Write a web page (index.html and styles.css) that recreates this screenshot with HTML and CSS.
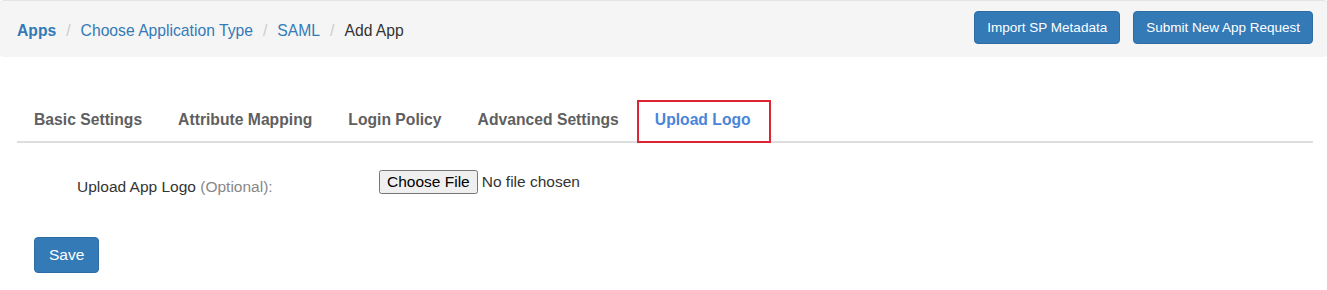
FILE: index.html
```html
<!DOCTYPE html>
<html lang="en">

<head>
    <meta charset="UTF-8">
    <meta name="viewport" content="width=device-width, initial-scale=1.0">
    <title>Add App</title>
    <link rel="stylesheet" href="styles.css">
</head>

<body>

    <!-- breadcrumb and actions -->
    <div class="page-header">
        <div class="breadcrumb">
            <a href="javascript:;" class="crumb crumb-home">Apps</a>
            <span class="sep">/</span>
            <a href="javascript:;" class="crumb">Choose Application Type</a>
            <span class="sep">/</span>
            <a href="javascript:;" class="crumb">SAML</a>
            <span class="sep">/</span>
            <span class="crumb crumb-active">Add App</span>
        </div>
        <div class="header-actions">
            <a href="javascript:;" class="btn btn-sm">Import SP Metadata</a>
            <a href="javascript:;" class="btn btn-sm">Submit New App Request</a>
        </div>
    </div>

    <!-- tabs -->
    <ul class="tabs">
        <li class="tab">Basic Settings</li>
        <li class="tab">Attribute Mapping</li>
        <li class="tab">Login Policy</li>
        <li class="tab">Advanced Settings</li>
        <li class="tab tab-active">Upload Logo</li>
    </ul>

    <form class="logo-form" onsubmit="return false;">
        <div class="form-row">
            <label class="form-label" for="appLogo">Upload App Logo <span class="muted">(Optional):</span></label>
            <input type="file" id="appLogo" class="file-input">
        </div>

        <button type="submit" class="btn btn-save">Save</button>
    </form>

</body>

</html>
```

FILE: styles.css
```css
* {
    margin: 0;
    padding: 0;
    box-sizing: border-box;
}

body {
    font-family: "Liberation Sans", Arial, sans-serif;
    font-size: 15.5px;
    color: #333;
    background-color: #fff;
}

a {
    text-decoration: none;
}

/*
*   header with breadcrumb
*/
.page-header {
    height: 57px;
    display: flex;
    align-items: center;
    justify-content: space-between;
    padding: 0 14px 0 17px;
    background-color: #f5f5f5;
    border-top: 1px solid #e4e4e4;
    border-radius: 4px;
}

.breadcrumb {
    display: flex;
    align-items: center;
    font-size: 15.7px;
    line-height: 20px;
    padding-top: 3px;
}

.crumb {
    color: #337ab7;
}

.crumb-home {
    font-weight: bold;
}

.crumb-active {
    color: #333;
}

.sep {
    color: #ccc;
    margin: 0 10px;
}

.header-actions {
    display: flex;
    gap: 13px;
    padding-bottom: 3px;
}

.btn {
    display: inline-block;
    color: #fff;
    background-color: #337ab7;
    border: 1px solid #2e6da4;
    border-radius: 4px;
    font-family: inherit;
    cursor: pointer;
}

.btn-sm {
    font-size: 13.5px;
    line-height: 19px;
    padding: 6px 12px;
}

/*
*   tabs
*/
.tabs {
    list-style: none;
    display: flex;
    margin: 43px 14px 0 17px;
    border-bottom: 2px solid #ddd;
}

.tab {
    font-weight: bold;
    font-size: 15.7px;
    color: #5f5f5f;
    line-height: 18px;
    padding: 9px 16px 12px;
    border: 2px solid transparent;
    margin-bottom: -2px;
}

.tab:first-child {
    padding-left: 15px;
}

.tab-active {
    color: #4a86d8;
    border-color: #dc2433;
    padding-right: 18px;
}

/*
*   form
*/
.logo-form {
    padding: 27px 17px 0;
}

.form-row {
    display: flex;
    align-items: flex-start;
    margin-left: 60px;
}

.form-label {
    width: 302px;
    line-height: 18px;
    padding-top: 8px;
}

.muted {
    color: #888;
}

.file-input {
    font-family: inherit;
    font-size: 15.5px;
    color: #333;
}

.btn-save {
    margin-top: 41px;
    margin-left: 17px;
    font-size: 15.5px;
    line-height: 20px;
    padding: 7px 14px;
}
```
